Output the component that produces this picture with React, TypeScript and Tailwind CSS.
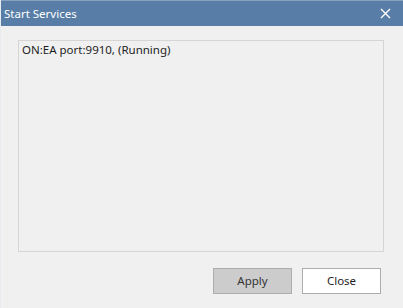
import React from 'react';

const App = () => {
    return (
        <div className="w-[403px] h-[308px] flex flex-col bg-[#f0f0f0] border-l border-[#e8ecf1] font-['Noto_Sans',sans-serif] text-[11.5px]">
            <div className="h-[26px] flex items-center justify-between bg-[#587ea8] border-t border-[#8aa1bd] pl-[3px] pr-[12px]">
                <span className="text-white leading-none">Start Services</span>
                <svg width="11" height="11" viewBox="0 0 11 11" className="text-white">
                    <path d="M1 1 L10 10 M10 1 L1 10" stroke="currentColor" strokeWidth="1.4"/>
                </svg>
            </div>
            <div className="flex-1 flex flex-col pl-[17px] pr-[19px] pt-[14px]">
                <div className="h-[212px] border border-[#d5d5d5] px-[3px] pt-[1px]">
                    <div className="text-[#1e1e1e] leading-[16px]">ON:EA port:9910, (Running)</div>
                </div>
                <div className="flex justify-end gap-[10px] mt-[16px] pr-[3px]">
                    <button className="w-[79px] h-[26px] bg-[#cccccc] border border-[#adadad] text-[#333333]">Apply</button>
                    <button className="w-[79px] h-[26px] bg-white border border-[#adadad] text-[#1e1e1e]">Close</button>
                </div>
            </div>
        </div>
    );
};

export default App;
